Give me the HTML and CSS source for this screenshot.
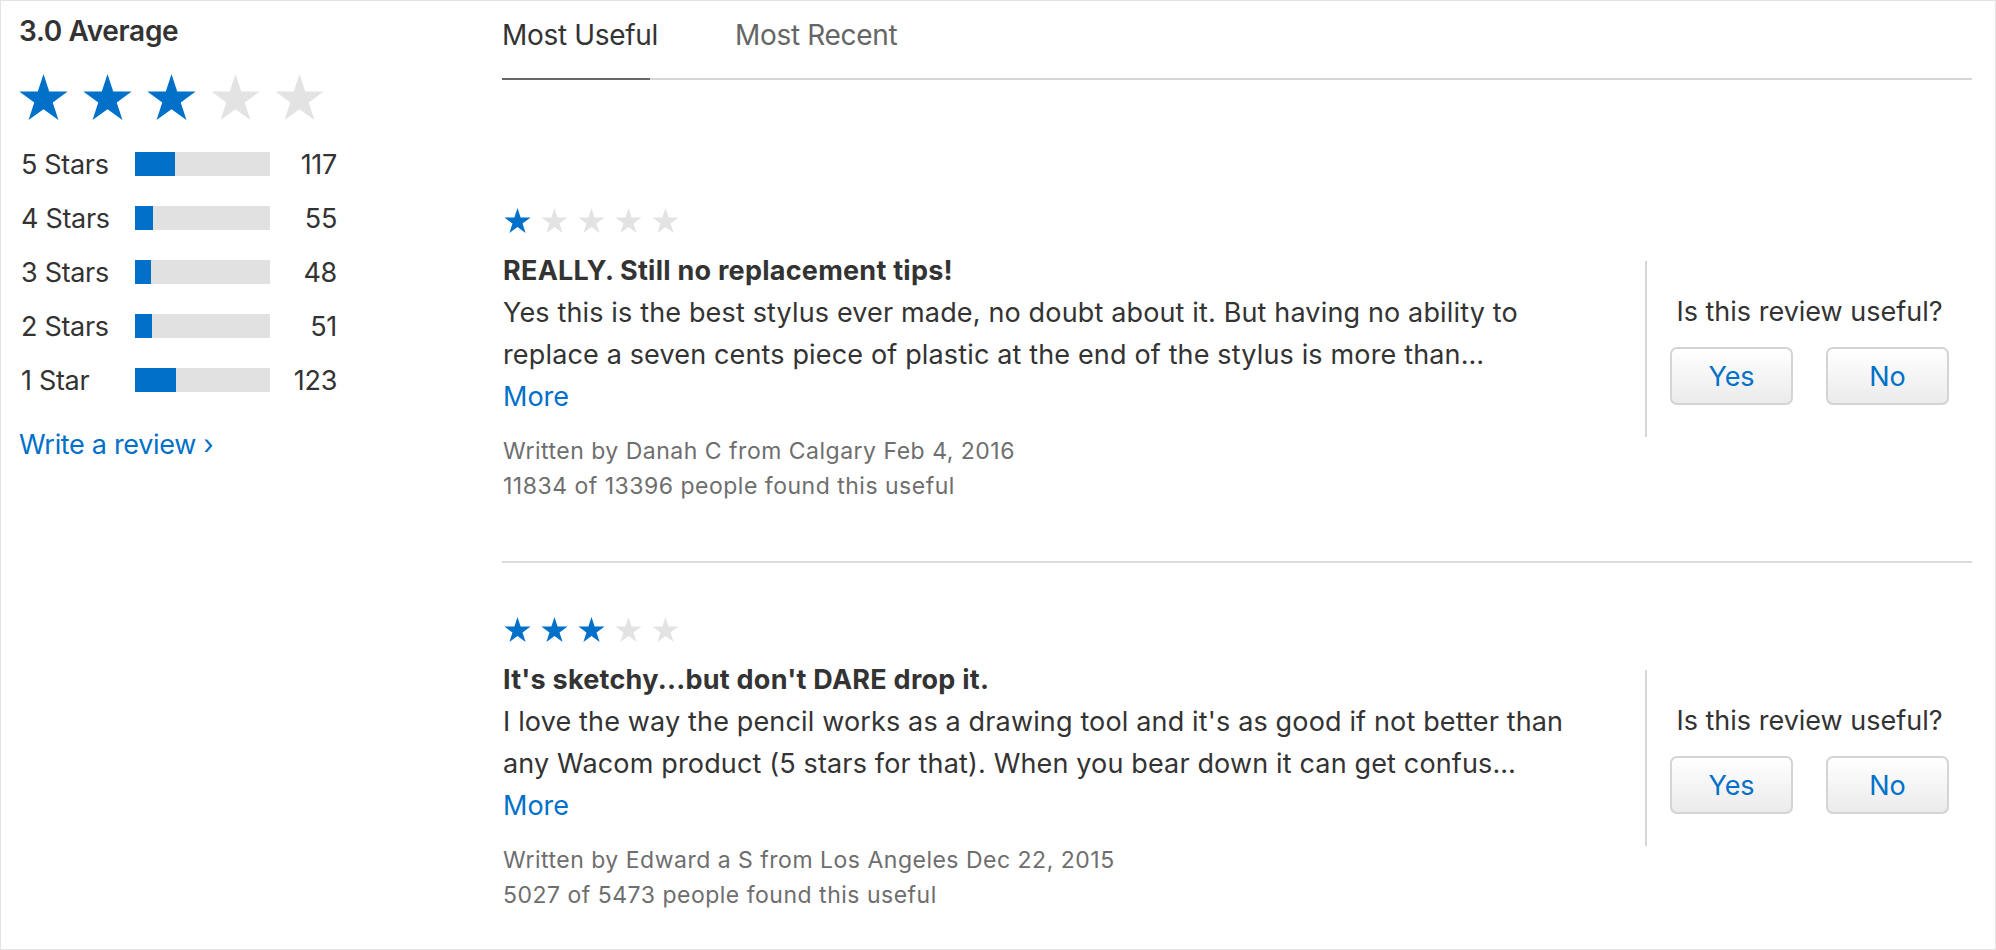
FILE: index.html
```html
<!DOCTYPE html>
<html lang="en">
<head>
<meta charset="utf-8">
<title>Reviews</title>
<link rel="stylesheet" href="styles.css">
</head>
<body>
<svg class="defs" width="0" height="0" aria-hidden="true">
  <defs>
    <symbol id="star" viewBox="0 0 22.83 21.71">
      <polygon points="11.41,0 14.11,8.29 22.83,8.29 15.77,13.42 18.47,21.71 11.41,16.58 4.36,21.71 7.05,13.42 0,8.29 8.72,8.29"/>
    </symbol>
  </defs>
</svg>
<div class="page">
  <aside class="summary">
    <h2 class="avg">3.0 Average</h2>
    <div class="big-stars">
      <svg class="star on"><use href="#star"/></svg>
      <svg class="star on"><use href="#star"/></svg>
      <svg class="star on"><use href="#star"/></svg>
      <svg class="star off"><use href="#star"/></svg>
      <svg class="star off"><use href="#star"/></svg>
    </div>
    <ul class="dist">
      <li class="dist-row"><span class="dist-label">5 Stars</span><span class="bar"><span class="fill" style="width:40px"></span></span><span class="count">117</span></li>
      <li class="dist-row"><span class="dist-label">4 Stars</span><span class="bar"><span class="fill" style="width:18px"></span></span><span class="count">55</span></li>
      <li class="dist-row"><span class="dist-label">3 Stars</span><span class="bar"><span class="fill" style="width:16px"></span></span><span class="count">48</span></li>
      <li class="dist-row"><span class="dist-label">2 Stars</span><span class="bar"><span class="fill" style="width:17px"></span></span><span class="count">51</span></li>
      <li class="dist-row"><span class="dist-label">1 Star</span><span class="bar"><span class="fill" style="width:41px"></span></span><span class="count">123</span></li>
    </ul>
    <a class="write" href="#">Write a review ›</a>
  </aside>
  <main class="reviews">
    <nav class="tabs">
      <span class="tab active">Most Useful</span>
      <span class="tab">Most Recent</span>
    </nav>
    <div class="list">
      <article class="review">
        <div class="small-stars">
          <svg class="sstar on"><use href="#star"/></svg>
          <svg class="sstar off"><use href="#star"/></svg>
          <svg class="sstar off"><use href="#star"/></svg>
          <svg class="sstar off"><use href="#star"/></svg>
          <svg class="sstar off"><use href="#star"/></svg>
        </div>
        <div class="review-row">
          <div class="review-body">
            <h3 class="review-title">REALLY. Still no replacement tips!</h3>
            <p class="review-text">Yes this is the best stylus ever made, no doubt about it. But having no ability to<br>replace a seven cents piece of plastic at the end of the stylus is more than…</p>
            <a class="more" href="#">More</a>
            <p class="meta">Written by Danah C from Calgary Feb 4, 2016<br>11834 of 13396 people found this useful</p>
          </div>
          <div class="useful">
            <p class="useful-q">Is this review useful?</p>
            <div class="useful-btns">
              <button class="btn">Yes</button>
              <button class="btn">No</button>
            </div>
          </div>
        </div>
      </article>
      <article class="review">
        <div class="small-stars">
          <svg class="sstar on"><use href="#star"/></svg>
          <svg class="sstar on"><use href="#star"/></svg>
          <svg class="sstar on"><use href="#star"/></svg>
          <svg class="sstar off"><use href="#star"/></svg>
          <svg class="sstar off"><use href="#star"/></svg>
        </div>
        <div class="review-row">
          <div class="review-body">
            <h3 class="review-title">It's sketchy...but don't DARE drop it.</h3>
            <p class="review-text">I love the way the pencil works as a drawing tool and it's as good if not better than<br>any Wacom product (5 stars for that). When you bear down it can get confus…</p>
            <a class="more" href="#">More</a>
            <p class="meta">Written by Edward a S from Los Angeles Dec 22, 2015<br>5027 of 5473 people found this useful</p>
          </div>
          <div class="useful">
            <p class="useful-q">Is this review useful?</p>
            <div class="useful-btns">
              <button class="btn">Yes</button>
              <button class="btn">No</button>
            </div>
          </div>
        </div>
      </article>
    </div>
  </main>
</div>
</body>
</html>
```
FILE: styles.css
```css
* { box-sizing: border-box; }
html, body { margin: 0; padding: 0; background: #fff; }
body {
  font-family: Inter, "Noto Sans", sans-serif;
  color: #333;
}
.defs { position: absolute; width: 0; height: 0; overflow: hidden; }

.page {
  display: flex;
  width: 1996px;
  height: 950px;
  border: 1px solid #e3e3e3;
  overflow: hidden;
}

/* summary column */
.summary {
  width: 501px;
  flex: none;
  padding: 13px 0 0 18px;
  letter-spacing: -0.02em;
}
.avg {
  margin: 0;
  font-size: 28px;
  font-weight: 600;
  line-height: 34px;
}
.big-stars {
  display: flex;
  gap: 15px;
  margin-top: 26px;
  height: 46px;
}
.star { width: 49px; height: 46px; }
.on { fill: #0070c9; }
.off { fill: #e3e3e3; }

.dist {
  list-style: none;
  margin: 17px 0 0;
  padding: 0;
}
.dist-row {
  display: flex;
  align-items: center;
  height: 54px;
  font-size: 27px;
}
.dist-label { width: 116px; flex: none; padding-left: 2px; }
.bar {
  width: 135px;
  height: 24px;
  background: #e1e1e1;
  display: flex;
}
.fill { background: #0070c9; height: 100%; }
.count { width: 67px; text-align: right; }

.write {
  display: block;
  margin-top: 21px;
  line-height: 34px;
  font-size: 27px;
  color: #0070c9;
  text-decoration: none;
}

/* reviews column */
.reviews {
  flex: 1;
  padding-right: 23px;
}
.tabs {
  display: flex;
  gap: 85px;
  padding-top: 17px;
  border-bottom: 2px solid #d6d6d6;
  letter-spacing: -0.02em;
}
.tab {
  font-size: 28px;
  line-height: 34px;
  padding-bottom: 26px;
  color: #666;
  white-space: nowrap;
}
.tab.active {
  width: 148px;
  color: #333;
  border-bottom: 2px solid #666;
  margin-bottom: -2px;
}
.list { padding-top: 74px; }
.review {
  padding: 54px 0 57px;
}
.review + .review { border-top: 2px solid #dcdcdc; }
.small-stars { display: flex; gap: 8px; height: 25px; padding-left: 1px; }
.sstar { width: 29px; height: 25px; }

.review-row {
  display: flex;
  align-items: flex-start;
  margin-top: 17px;
}
.review-body { flex: 1; padding-left: 1px; }
.review-title {
  margin: 0;
  font-size: 27px;
  font-weight: 700;
  line-height: 42px;
  letter-spacing: 0.25px;
}
.review-text {
  margin: 0;
  font-size: 27px;
  line-height: 42px;
  letter-spacing: 0.15px;
}
.more {
  display: block;
  font-size: 27px;
  line-height: 42px;
  color: #0070c9;
  text-decoration: none;
}
.meta {
  margin: 16px 0 0;
  font-size: 23px;
  line-height: 35px;
  letter-spacing: 0.5px;
  color: #6e6e6e;
}
.useful {
  width: 327px;
  flex: none;
  height: 176px;
  margin-top: 11px;
  border-left: 2px solid #d6d6d6;
  padding-top: 30px;
  text-align: center;
}
.useful-q {
  margin: 0;
  font-size: 27px;
  line-height: 42px;
}
.useful-btns {
  display: flex;
  justify-content: center;
  gap: 33px;
  margin-top: 14px;
}
.btn {
  width: 123px;
  height: 58px;
  border: 2px solid #d4d4d4;
  border-radius: 7px;
  background: linear-gradient(#ffffff, #ebebeb);
  color: #0070c9;
  font-family: inherit;
  font-size: 27px;
  padding: 0;
}
```
